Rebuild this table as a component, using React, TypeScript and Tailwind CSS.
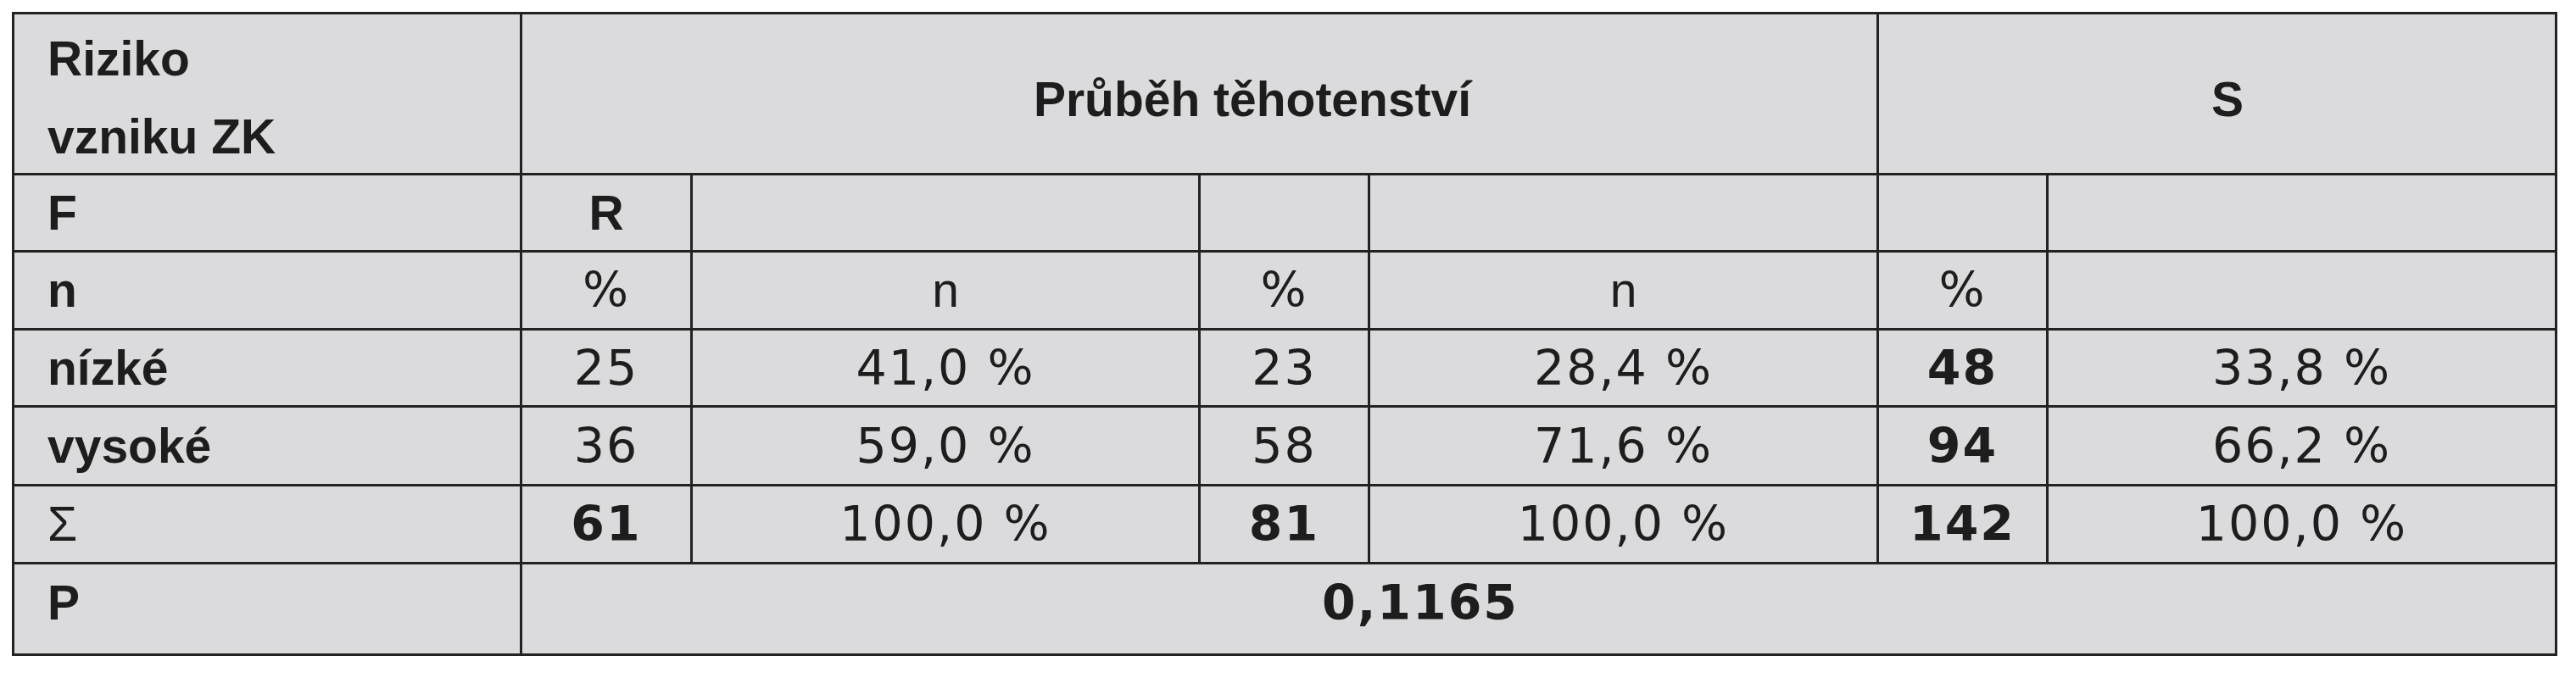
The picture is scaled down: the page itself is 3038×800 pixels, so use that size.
const label = "font-['Liberation_Sans',Arial,sans-serif]";
const num = "font-['DejaVu_Sans','Liberation_Sans',sans-serif] tracking-[2px]";

type Row = {
  name: string;
  bold?: boolean;
  values: { text: string; strong?: boolean }[];
};

const rows: Row[] = [
  {
    name: "nízké",
    bold: true,
    values: [
      { text: "25" },
      { text: "41,0 %" },
      { text: "23" },
      { text: "28,4 %" },
      { text: "48", strong: true },
      { text: "33,8 %" },
    ],
  },
  {
    name: "vysoké",
    bold: true,
    values: [
      { text: "36" },
      { text: "59,0 %" },
      { text: "58" },
      { text: "71,6 %" },
      { text: "94", strong: true },
      { text: "66,2 %" },
    ],
  },
  {
    name: "Σ",
    values: [
      { text: "61", strong: true },
      { text: "100,0 %" },
      { text: "81", strong: true },
      { text: "100,0 %" },
      { text: "142", strong: true },
      { text: "100,0 %" },
    ],
  },
];

function Cell({
  children,
  className = "",
}: {
  children?: React.ReactNode;
  className?: string;
}) {
  return (
    <div className={`flex items-center bg-[#dbdbdd] text-[57px] leading-none text-[#1d1d1d] ${className}`}>
      {children}
    </div>
  );
}

export default function App() {
  return (
    <main className="min-h-screen w-full bg-white pl-[14px] pt-[14px]">
      <div className="grid w-fit grid-cols-[596px_198px_596px_197px_597px_197px_597px] grid-rows-[187px_88px_89px_88px_90px_89px_105px] gap-[3px] bg-[#222222] p-[3px]">
        {/* hlavička */}
        <Cell className={`${label} pl-[39px] pt-[8px] font-bold`}>
          <div className="leading-[92px]">
            Riziko
            <br />
            vzniku ZK
          </div>
        </Cell>
        <Cell className={`${label} col-span-4 justify-center pl-[125px] pt-[13px] font-bold`}>
          Průběh těhotenství
        </Cell>
        <Cell className={`${label} col-span-2 justify-center pl-[25px] pt-[13px] font-bold`}>
          S
        </Cell>

        <Cell className={`${label} pl-[39px] font-bold`}>F</Cell>
        <Cell className={`${label} justify-center font-bold`}>R</Cell>
        <Cell />
        <Cell />
        <Cell />
        <Cell />
        <Cell />

        <Cell className={`${label} pl-[39px] font-bold`}>n</Cell>
        <Cell className={`${num} justify-center`}>%</Cell>
        <Cell className={`${label} justify-center`}>n</Cell>
        <Cell className={`${num} justify-center`}>%</Cell>
        <Cell className={`${label} justify-center`}>n</Cell>
        <Cell className={`${num} justify-center`}>%</Cell>
        <Cell />

        {rows.map((row) => (
          <div key={row.name} className="contents">
            <Cell className={`${label} pl-[39px] ${row.bold ? "font-bold" : ""}`}>
              {row.name}
            </Cell>
            {row.values.map((v, i) => (
              <Cell key={i} className={`${num} justify-center ${v.strong ? "font-bold" : ""}`}>
                {v.text}
              </Cell>
            ))}
          </div>
        ))}

        <Cell className={`${label} pb-[14px] pl-[39px] font-bold`}>P</Cell>
        <Cell className={`${num} col-span-6 justify-center pb-[14px] pr-[279px] font-bold`}>
          0,1165
        </Cell>
      </div>
    </main>
  );
}
